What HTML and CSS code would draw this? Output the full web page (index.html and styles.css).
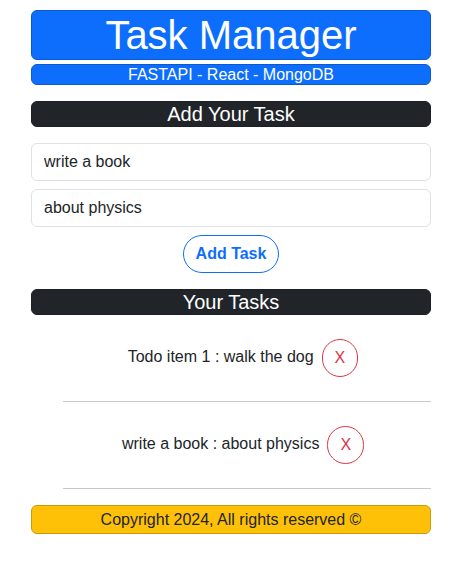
FILE: index.html
```html
<!DOCTYPE html>
<html lang="en">
<head>
<meta charset="utf-8">
<title>Task Manager</title>
<link rel="stylesheet" href="styles.css">
</head>
<body>
<main class="app">
  <h1 class="title">Task Manager</h1>
  <h6 class="subtitle">FASTAPI - React - MongoDB</h6>
  <h5 class="section">Add Your Task</h5>
  <form class="form">
    <input class="field" type="text" value="write a book">
    <input class="field" type="text" value="about physics">
    <button class="add" type="button">Add Task</button>
  </form>
  <h5 class="section section-list">Your Tasks</h5>
  <ul class="tasks">
    <li class="task"><span class="task-text">Todo item 1 : walk the dog</span><button class="remove" type="button">X</button></li>
    <li class="task"><span class="task-text">write a book : about physics</span><button class="remove" type="button">X</button></li>
  </ul>
  <footer class="footer">Copyright 2024, All rights reserved ©</footer>
</main>
</body>
</html>
```
FILE: styles.css
```css
*, *::before, *::after { box-sizing: border-box; }
body {
  margin: 0;
  background: #fff;
  color: #212529;
  font: 400 16px/24px "Liberation Sans", Arial, sans-serif;
}
.app {
  width: 400px;
  margin: 10px 0 0 31px;
  text-align: center;
}
.title, .subtitle, .section { margin: 0; font-weight: 400; color: #fff; }
.title {
  height: 50px;
  border: 1px solid #0c59cf;
  border-radius: 6px;
  background: #0d6efd;
  font-size: 40px;
  line-height: 48px;
}
.subtitle {
  height: 21px;
  margin-top: 4px;
  border: 1px solid #0c59cf;
  border-radius: 6px;
  background: #0d6efd;
  font-size: 16px;
  line-height: 19px;
}
.section {
  height: 26px;
  margin: 16px 0;
  border: 1px solid #1c1f23;
  border-radius: 6px;
  background: #212529;
  font-size: 20px;
  line-height: 24px;
}
.section-list { margin-bottom: 0; }
.form { display: flex; flex-direction: column; align-items: center; gap: 8px; }
.field {
  width: 100%;
  height: 38px;
  padding: 6px 12px;
  border: 1px solid #dee2e6;
  border-radius: 6px;
  background: #fff;
  color: inherit;
  font: inherit;
}
.add {
  height: 38px;
  padding: 6px 12px;
  border: 1px solid #0d6efd;
  border-radius: 50px;
  background: transparent;
  color: #0d6efd;
  font: inherit;
  font-weight: 700;
}
.tasks { margin: 0; padding: 0 0 0 32px; list-style: none; }
.task {
  display: flex;
  align-items: center;
  justify-content: center;
  gap: 8px;
  height: 87px;
  padding: 24px 8px 24px 0;
  border-bottom: 1px solid #c8c9ca;
}
.task-text { padding-bottom: 2px; }
.remove {
  height: 38px;
  padding: 6px 12px;
  border: 1px solid #dc3545;
  border-radius: 50px;
  background: transparent;
  color: #dc3545;
  font: inherit;
}
.footer {
  height: 29px;
  margin-top: 16px;
  border: 1px solid #cc9a06;
  border-radius: 6px;
  background: #ffc107;
  line-height: 27px;
}
```
